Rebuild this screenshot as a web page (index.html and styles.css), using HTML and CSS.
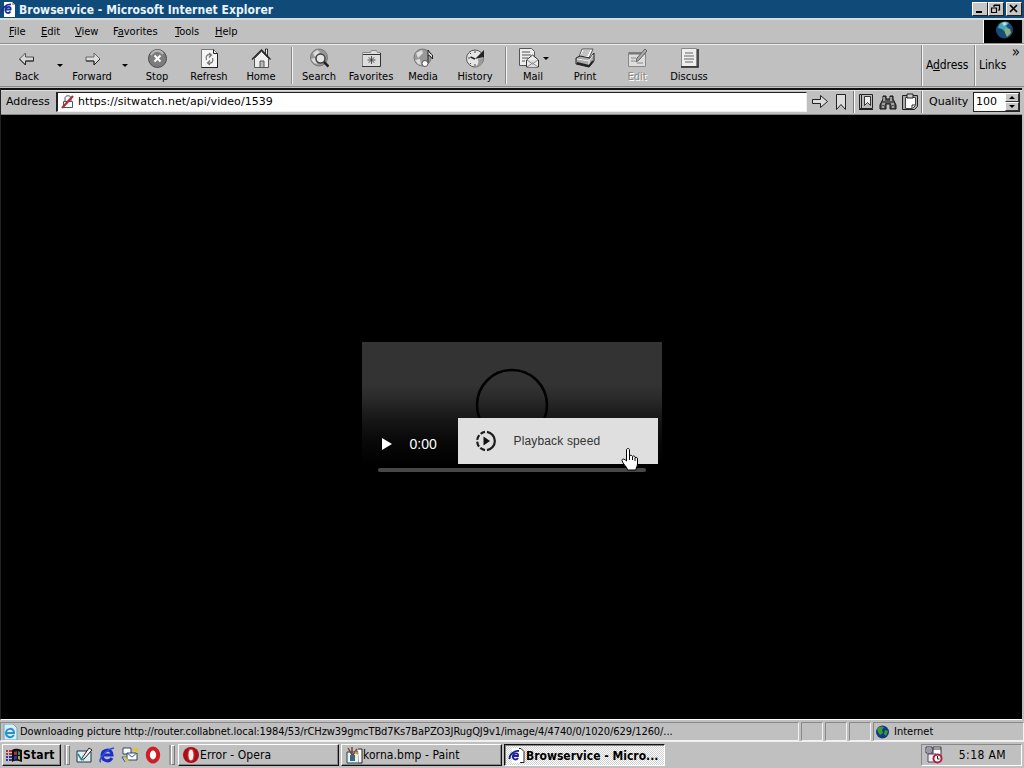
FILE: index.html
```
<!DOCTYPE html>
<html lang="en">
<head>
  <meta charset="UTF-8" />
  <title>Browservice - Microsoft Internet Explorer</title>
  <link rel="stylesheet" href="styles.css">
</head>
<body>

  <div class="titlebar">
    <svg class="i16" viewBox="0 0 16 16"><path d="M3 1h8l3 3v12H3z" fill="#fff"/><path d="M11 1v3h3" fill="#aaa"/><path d="M9.500 10.500c-2 3-6 1-5-2.500 1-3 6-3 5 .5H4M1 12C0 8 5 3 10 3.500" fill="none" stroke="#1a2d9c" stroke-width="1.800"/></svg>
    <span class="title">Browservice - Microsoft Internet Explorer</span>
    <div class="winbtns">
      <span class="winbtn"><svg viewBox="0 0 14 12"><path d="M3 9h6" stroke="#000" stroke-width="2"/></svg></span>
      <span class="winbtn"><svg viewBox="0 0 14 12"><path d="M5 4V2.500h5.500V7H9M5 2h6M2.500 5h5v4.500h-5zM2 5h6" fill="none" stroke="#000" stroke-width="1.200"/></svg></span>
      <span class="winbtn close"><svg viewBox="0 0 14 12"><path d="M3 2l7 7M10 2l-7 7" stroke="#000" stroke-width="1.700"/></svg></span>
    </div>
  </div>

  <div class="menubar">
    <span class="m-file"><u>F</u>ile</span>
    <span class="m-edit"><u>E</u>dit</span>
    <span class="m-view"><u>V</u>iew</span>
    <span class="m-fav">F<u>a</u>vorites</span>
    <span class="m-tools"><u>T</u>ools</span>
    <span class="m-help"><u>H</u>elp</span>
    <div class="throbber">
      <svg width="38" height="22" viewBox="0 0 38 22"><circle cx="20.500" cy="10" r="8.500" fill="#174d78"/><path d="M15 5c3-4 8-4 10-2l-3 3 3 3-3 4-4-4-4-1z" fill="#4aa7b4"/><path d="M21 8l5 1 1 4-4 4-2-4z" fill="#8fae78"/><path d="M18 3l3-1 2 2-3 2z" fill="#b9dedf"/></svg>
    </div>
  </div>

  <div class="toolbar">
    <div class="tb back"><svg viewBox="0 0 20 20"><path d="M2.500 11l6-6v4h8v4h-8v4z" fill="#d8d8d8" stroke="#555"/><path d="M2.500 11l6 6v-4h8V9" fill="none" stroke="#222"/></svg><span>Back</span></div>
    <div class="drop"></div>
    <div class="tb fwd"><svg viewBox="0 0 20 20"><path d="M18 11l-6-6v4H4v4h8v4z" fill="#ddd" stroke="#666"/><path d="M4 13h8v4l6-6" fill="none" stroke="#222"/></svg><span>Forward</span></div>
    <div class="drop"></div>
    <div class="tb"><svg viewBox="0 0 20 20"><circle cx="10.500" cy="10.500" r="9" fill="#7c7c7c" stroke="#4a4a4a"/><path d="M4 7c3-6 10-5 12-1" fill="none" stroke="#b8b8b8" stroke-width="2"/><path d="M7.500 7.500l6 6M13.500 7.500l-6 6" stroke="#fff" stroke-width="2"/></svg><span>Stop</span></div>
    <div class="tb"><svg viewBox="0 0 20 20"><path d="M2.500 1.500h12l4 4v14h-16z" fill="#f4f4f4" stroke="#777"/><path d="M14.500 1.500v4h4v14h-16" fill="none" stroke="#222"/><path d="M7.500 12c-1.500-4 1-6 4-5M10 5l2.500 2-2.500 2.500M13.500 10c1.500 3-1 6-4 5M11 17l-2.500-2 2.500-2.500" fill="none" stroke="#777" stroke-width="1.300"/></svg><span>Refresh</span></div>
    <div class="tb"><svg viewBox="0 0 20 20"><path d="M14.500 6V1h2v9" fill="#eee" stroke="#333"/><path d="M3.500 10.500v9h14v-9l-7-7z" fill="#eee" stroke="#555"/><path d="M1 11.500L10.500 2l9 9.500" fill="none" stroke="#222" stroke-width="1.300"/><path d="M9 19v-6h4v6" fill="#bbb" stroke="#555"/></svg><span>Home</span></div>
    <div class="sep"></div>
    <div class="tb"><svg viewBox="0 0 20 20"><circle cx="10" cy="9.500" r="8.500" fill="#999" stroke="#777"/><path d="M4 5l4-3 3 2-5 5zM2 11l4-1 2 6-3-1z" fill="#ddd"/><circle cx="11.500" cy="10.500" r="4.500" fill="#e6e6e6" stroke="#444" stroke-width="1.500"/><path d="M15 14l4.500 4.500" stroke="#222" stroke-width="2.500"/></svg><span>Search</span></div>
    <div class="tb"><svg viewBox="0 0 20 20"><path d="M1.500 5.500v-1h8l1-2h5l1 2h3v14h-18z" fill="#ddd" stroke="#888"/><path d="M1 18.500h18.500V5M2 6.500h17" fill="none" stroke="#333"/><path d="M10.500 8v8M6.500 12h8M7.700 9.200l5.600 5.600M13.300 9.200l-5.600 5.600" stroke="#444" stroke-width=".9"/></svg><span>Favorites</span></div>
    <div class="tb"><svg viewBox="0 0 20 20"><circle cx="9.500" cy="9.500" r="8.500" fill="#999" stroke="#777"/><path d="M3 5l6-3 1 3-5 5zM2 12l5-1 1 6-3-1z" fill="#ddd"/><path d="M15 15V2l2 3 2.500 2v4l-2.500-3-2-1" fill="#ddd" stroke="#222"/><circle cx="12" cy="15.500" r="3" fill="#fff" stroke="#555"/></svg><span>Media</span></div>
    <div class="tb"><svg viewBox="0 0 20 20"><circle cx="10" cy="10.500" r="8.500" fill="#e5e5e5" stroke="#555"/><path d="M10 3v2M3 10h2M5 5l1 1M5 16l1-1M10 16v2M15 15l1 1" stroke="#444"/><path d="M10 11l9-9v7z" fill="#222"/><path d="M10 11l8.500-1c0 5-3 9-8.500 9 3-2 4-4 3-8z" fill="#999"/><path d="M5.500 9l4.500 2" stroke="#222" stroke-width="1.500"/></svg><span>History</span></div>
    <div class="sep"></div>
    <div class="tb mail"><svg viewBox="0 0 20 20"><path d="M.5.500h12l3 3v14H.5z" fill="#eee" stroke="#555"/><path d="M3 4h8M3 7h9M3 10h6M3 13h3" stroke="#555"/><path d="M7.500 12l6-5 6 5v7h-12z" fill="#eee" stroke="#333"/><path d="M8 19l5.500-4 5.500 4M8 12l5.500 4 5.500-4" fill="#ddd" stroke="#888"/></svg><i class="mini"></i><span>Mail</span></div>
    <div class="tb"><svg viewBox="0 0 20 20"><path d="M4 9l3-8h11l-4 9z" fill="#fff" stroke="#555"/><path d="M8 3h7M7 5h7M6 7h7" stroke="#888"/><path d="M1 10l4-2 10 2 4-5v8l-5 6-13-3z" fill="#aaa" stroke="#222"/><path d="M2 11l12 2v5M14 13l4-6" fill="none" stroke="#eee"/><path d="M2 15l12 3 4-5" fill="none" stroke="#222" stroke-width="2"/></svg><span>Print</span></div>
    <div class="tb off"><svg viewBox="0 0 20 20"><path d="M1.500 4.500h17v14h-17z" fill="#ddd" stroke="#888"/><path d="M2 5.500h16" stroke="#777" stroke-width="2"/><path d="M4 10h5M4 13h4M10 15h6" stroke="#888"/><path d="M9 14l1-4 8-9 2 2-8 9z" fill="#aaa" stroke="#666"/></svg><span>Edit</span></div>
    <div class="tb"><svg viewBox="0 0 20 20"><path d="M2.500.500h15v18h-15z" fill="#eee" stroke="#888"/><path d="M2 19h17V1" fill="none" stroke="#222" stroke-width="1.500"/><path d="M6 5h8M5 8h10M5 11h10M6 14h8" stroke="#666"/></svg><span>Discuss</span></div>
    <div class="band band-addr">A<u>d</u>dress</div>
    <div class="band band-links">Links<span class="chev">»</span></div>
  </div>

  <div class="page">
    <div class="addressbar">
      <span class="lbl">Address</span>
      <div class="url">
        <svg width="16" height="16" viewBox="0 0 16 16"><path d="M5 7V4c0-3 6-3 6 0v3M3.500 7.500h9v6h-9z" fill="none" stroke="#555"/><path d="M2 14L13 2" stroke="#b5293f" stroke-width="2.200"/></svg>
        <span>https://sitwatch.net/api/video/1539</span>
      </div>
      <div class="tools">
        <svg class="go" viewBox="0 0 18 18"><path d="M1.500 6.500h8v-4l7 6-7 6v-4h-8z" fill="#ddd" stroke="#222"/></svg>
        <svg class="mark" viewBox="0 0 18 18"><path d="M4.500 1.500h9v15l-4.500-5-4.500 5z" fill="#ddd" stroke="#222"/></svg>
        <i class="vsep"></i>
        <svg viewBox="0 0 18 18"><path d="M2.500 1.500h13v14h-13z" fill="#bbb" stroke="#222"/><path d="M4.500 2v13" stroke="#222"/><path d="M7.500 3.500h6v9l-3-3-3 3z" fill="#eee" stroke="#333"/><path d="M2 16.500h14" stroke="#222"/></svg>
        <svg class="find" viewBox="0 0 18 18"><path d="M4 3h3v3h4V3h3v3l3 6v4h-6v-5H7v5H1v-4l3-6z" fill="#555" stroke="#111"/><path d="M3 11h3M12 11h3M5 4v4M12 4v4M3 14h2M13 14h2" stroke="#eee"/></svg>
        <svg viewBox="0 0 18 18"><path d="M1.500 2.500h15v11l-3 3h-12z" fill="#aaa" stroke="#222"/><path d="M4.500 4.500h10v8l-3 3h-7z" fill="#fff" stroke="#444"/><path d="M6 1h6v4H6z" fill="#ccc" stroke="#222"/><path d="M14 12h-3v3" fill="none" stroke="#222"/></svg>
        <i class="vsep"></i>
      </div>
      <span class="quality">Quality</span>
      <div class="spin"><span>100</span>
        <div class="arrows"><b class="up"></b><b class="down"></b></div>
      </div>
    </div>

    <div class="viewport">
      <div class="video">
        <svg class="ring" width="74" height="74" viewBox="0 0 74 74"><circle cx="37" cy="37" r="35" fill="none" stroke="#000" stroke-width="2.500"/></svg>
        <div class="controls">
          <svg width="10" height="12" viewBox="0 0 10 12"><path d="M0 0l10 6-10 6z" fill="#fff"/></svg>
          <span>0:00</span>
        </div>
        <div class="track"></div>
        <div class="popup">
          <svg width="24" height="24" viewBox="0 0 24 24"><path d="M13 2.900a9.200 9.200 0 0 1 0 18.200" fill="none" stroke="#1c1c1c" stroke-width="2.200"/><path d="M11 21.100a9.200 9.200 0 0 1 0-18.200" fill="none" stroke="#1c1c1c" stroke-width="2.200" stroke-dasharray="5.200 1.900"/><path d="M9.500 7.500l6.500 4.500-6.500 4.500z" fill="#111"/></svg>
          <span>Playback speed</span>
        </div>
        <svg class="cursor" width="18" height="23" viewBox="0 0 18 23"><path d="M5.500 13V2c0-2 3-2 3 0v6c1-1 2.500-1 3 .5 1-1 2.500-.5 2.500 1 1.500-.5 2.500 0 2.500 1.500v5c0 2-1.500 3-1.500 6H6.500c0-3-5-6-5.500-9.500 0-2 2-2 4.500.5z" fill="#fff" stroke="#000"/><path d="M8.500 8v4M11.500 9v3M14 10v3" stroke="#000"/></svg>
      </div>
    </div>
  </div>

  <div class="statusbar">
    <div class="cell msg">
      <svg class="i16" viewBox="0 0 16 16"><path d="M2 0h9l4 4v12H2z" fill="#d8eef8" stroke="#6ab"/><path d="M12 11c-3 4-8 2-8-2 0-5 8-6 8 0H4" fill="none" stroke="#2c8fc9" stroke-width="2"/></svg>
      <span>Downloading picture http://router.collabnet.local:1984/53/rCHzw39gmcTBd7Ks7BaPZO3JRugQJ9v1/image/4/4740/0/1020/629/1260/...</span>
    </div>
    <div class="cell small"></div>
    <div class="cell small"></div>
    <div class="cell small"></div>
    <div class="cell zone">
      <svg class="i16" viewBox="0 0 16 16"><circle cx="8.500" cy="8" r="6.500" fill="#123a80"/><path d="M3 5c2-3 5-3 7-2L8 6l1 3-3 2-2-3zM11 6l3 1-2 5-2-2z" fill="#3c9a3c"/></svg>
      <span>Internet</span>
    </div>
  </div>

  <div class="taskbar">
    <div class="start">
      <svg width="17" height="15" viewBox="0 0 17 15"><path d="M6 2c3-2 6-1 10 0v12c-4-1-7-2-10 0z" fill="#111"/><path d="M8 4l3-1v4H8z" fill="#a33"/><path d="M12 3l2 1v3h-2z" fill="#386"/><path d="M8 8h3v3l-3 1z" fill="#33a"/><path d="M12 8h2v4l-2-1z" fill="#aa3"/><path d="M0 3h2M3 3h3M0 6h2M3 6h3" stroke="#a34" stroke-width="2"/><path d="M0 9h2M3 9h3M0 12h2M3 12h3" stroke="#339" stroke-width="2"/></svg>
      <span>Start</span>
    </div>
    <i class="grip g1"></i>
    <div class="quick">
      <svg class="i18" viewBox="0 0 18 18"><path d="M2 5h10l4 1v10H2z" fill="#dff0f5" stroke="#234"/><path d="M7 12L14 2l3 2-8 9-3 1z" fill="#eee" stroke="#222"/><path d="M3 8l3 5 3 1" fill="none" stroke="#288" stroke-width="1.500"/></svg>
      <svg class="i18" viewBox="0 0 18 18"><path d="M14 12c-3 5-10 3-10-3s10-7 10 0H5" fill="none" stroke="#1c2fc8" stroke-width="3"/><path d="M3 16c-4-1 5-13 13-14" fill="none" stroke="#2b4fd8" stroke-width="1.500"/></svg>
      <svg class="i18" viewBox="0 0 18 18"><path d="M2 2h8v6H2z" fill="#fff" stroke="#346"/><path d="M6 7h10v7H6z" fill="#fff" stroke="#345"/><path d="M6 7l5 4 5-4M4 16l-3-5h4" fill="none" stroke="#245dc0"/><path d="M11 4l5-1v4M3 11l4 4" stroke="#e2c02c" stroke-width="2" fill="none"/></svg>
      <svg class="i18" viewBox="0 0 18 18"><ellipse cx="9" cy="9" rx="5.200" ry="6.500" fill="#fff" stroke="#d01c24" stroke-width="4"/></svg>
    </div>
    <i class="grip g2"></i>
    <div class="task">
      <svg class="i18" viewBox="0 0 18 18"><circle cx="9" cy="9" r="8" fill="#a80f16"/><ellipse cx="9" cy="9" rx="3" ry="6" fill="#eee" stroke="#d8343a"/></svg>
      <span>Error - Opera</span>
    </div>
    <div class="task">
      <svg class="i18" viewBox="0 0 18 18"><path d="M2 6h12v11H2z" fill="#e8f2f2" stroke="#244"/><path d="M13 3h4v14h-3" fill="#fff" stroke="#222"/><path d="M3 2l4 7M7 1v9M12 3l-4 6" stroke="#744" stroke-width="1.500"/><path d="M5 9h5v6H5z" fill="#386b80"/><path d="M10 6l3 2" stroke="#c93" stroke-width="2"/></svg>
      <span>korna.bmp - Paint</span>
    </div>
    <div class="task active">
      <svg class="i18" viewBox="0 0 18 18"><path d="M4 2h8l4 4v11H4z" fill="#fff"/><path d="M11 2.500h2l3 3V16.500h-4" fill="none" stroke="#222"/><path d="M10 12c-2 3-6 1-5-2.500 1-3 6-3 5 .5H5M1.500 13C1 9 6 4 11 5" fill="none" stroke="#1a2494" stroke-width="1.800"/></svg>
      <span>Browservice - Micro...</span>
    </div>
    <div class="tray">
      <svg class="i18" viewBox="0 0 18 18"><path d="M1 1h6v6H1zM8 1h8v9H8z" fill="#fff" stroke="#334"/><path d="M2 3h4M2 5h4M8 3h8" stroke="#334"/><path d="M3 8h8v8H3z" fill="#eee" stroke="#546"/><circle cx="12.500" cy="12.500" r="4" fill="#fff" stroke="#b3203c" stroke-width="2"/><path d="M12.500 10v3h2" fill="none" stroke="#222"/></svg>
      <span>5:18 AM</span>
    </div>
  </div>

</body>
</html>
```
FILE: styles.css
```
* {
  box-sizing: border-box;
}

body {
  margin: 0;
  width: 1024px;
  height: 768px;
  overflow: hidden;
  display: flex;
  flex-direction: column;
  background: #c0c0c0;
  color: #000;
  font: 11px/14px "DejaVu Sans Condensed", "DejaVu Sans", sans-serif;
  font-stretch: condensed;
  white-space: nowrap;
}

svg {
  display: block;
  flex: none;
}

u {
  text-underline-offset: 1px;
}

.i16 {
  width: 16px;
  height: 16px;
}

.i18 {
  width: 18px;
  height: 18px;
}

/* title bar */
.titlebar {
  height: 18px;
  flex: none;
  display: flex;
  align-items: center;
  padding: 0 2px 0 1px;
  background: #104a78;
  color: #e8f4fa;
  font-weight: bold;
}

.title {
  margin: 1px 0 0 2px;
  font-size: 12px;
  letter-spacing: 0.05px;
}

.winbtns {
  margin-left: auto;
  display: flex;
}

.winbtn {
  width: 16px;
  height: 14px;
  background: #c6c6c6;
  border: 1px solid;
  border-color: #fff #222 #222 #fff;
}

.close {
  margin-left: 2px;
}

/* menu */
.menubar {
  height: 26px;
  flex: none;
  display: flex;
  align-items: center;
  padding-left: 9px;
  border-top: 2px solid #d8dde0;
  border-bottom: 1px solid #909090;
}

.m-file { width: 32px; }
.m-edit { width: 34px; }
.m-view { width: 38px; }
.m-fav { width: 62px; }
.m-tools { width: 40px; }

.throbber {
  margin-left: auto;
  margin-right: 2px;
  height: 23px;
  background: #000;
  border-left: 1px solid #fff;
}

/* button row */
.toolbar {
  height: 43px;
  flex: none;
  display: flex;
  padding-left: 2px;
  border-top: 1px solid #eee;
  border-bottom: 1px solid #888;
}

.tb {
  width: 52px;
  padding-top: 3px;
  display: flex;
  flex-direction: column;
  align-items: center;
  position: relative;
}

.tb svg {
  width: 20px;
  height: 20px;
  margin-bottom: 2px;
}

.tb.back {
  width: 50px;
}

.tb.fwd {
  width: 50px;
}

.tb.off {
  color: #8c8c8c;
  text-shadow: 1px 1px #fff;
}

.drop {
  width: 15px;
  padding: 19px 0 0 5px;
}

.fwd + .drop {
  width: 14px;
}

.drop::before,
.mini {
  content: "";
  display: block;
  width: 0;
  border: 3px solid transparent;
  border-top-color: #000;
  border-bottom: 0;
}

.tb.mail svg {
  margin-right: 8px;
}

.mini {
  position: absolute;
  left: 36px;
  top: 12px;
}

.sep {
  width: 6px;
  margin: 2px 0;
  border-right: 1px solid #f4f4f4;
  box-shadow: inset -1px 0 #888;
}

.band {
  padding: 13px 0 0 4px;
  border-left: 1px solid #888;
  box-shadow: inset 1px 0 #f4f4f4;
  font-size: 12px;
  letter-spacing: -0.1px;
}

.band-addr {
  margin-left: auto;
  width: 53px;
}

.band-links {
  width: 50px;
  position: relative;
}

.chev {
  position: absolute;
  right: 4px;
  top: 0;
  font-size: 15px;
}

/* page frame */
.page {
  flex: 1;
  display: flex;
  flex-direction: column;
  margin: 1px 2px 0 0;
  border-left: 1px solid #222;
  border-top: 2px solid #111;
  border-bottom: 1px solid #fff;
}

.addressbar {
  height: 25px;
  flex: none;
  display: flex;
  align-items: center;
  padding: 0 0 2px 5px;
  border-top: 1px solid #ddd;
  border-bottom: 1px solid #888;
  font-family: "DejaVu Sans", sans-serif;
  font-stretch: normal;
}

.lbl {
  width: 50px;
}

.url {
  width: 751px;
  height: 20px;
  display: flex;
  align-items: center;
  background: #fff;
  border: 1px solid #eee;
  border-left: 2px solid #222;
  border-top: 1px solid #222;
  padding-left: 2px;
}

.url span {
  margin-left: 2px;
  letter-spacing: 0.05px;
}

.tools {
  display: flex;
  align-items: center;
  padding-left: 2px;
}

.tools svg {
  width: 18px;
  height: 18px;
  margin: 0 2px;
}

.tools .mark {
  margin: 0 3px 0 1px;
}

.tools .find {
  margin: 0 2px;
}

.vsep {
  width: 2px;
  height: 22px;
  background: #fff;
  border-left: 1px solid #777;
}

.quality {
  margin-left: 6px;
}

.spin {
  margin-left: auto;
  margin-right: 2px;
  width: 47px;
  height: 20px;
  display: flex;
  justify-content: space-between;
  align-items: center;
  background: #fff;
  border: 1px solid #222;
  padding-left: 2px;
}

.arrows b {
  display: flex;
  align-items: center;
  justify-content: center;
  width: 14px;
  height: 9px;
  background: #c6c6c6;
  border: 1px solid;
  border-color: #fff #333 #333 #fff;
}

.arrows b::before {
  content: "";
  border: 3px solid transparent;
}

.arrows .up::before {
  border-top: 0;
  border-bottom-color: #000;
}

.arrows .down::before {
  border-bottom: 0;
  border-top-color: #000;
}

.viewport {
  flex: 1;
  background: #000;
  display: flex;
  align-items: center;
  justify-content: center;
}

/* video player */
.video {
  position: relative;
  width: 300px;
  height: 150px;
  background: linear-gradient(#333 0, #333 42px, #2a2a2a 56px, #161616 78px, #090909 98px, #000 122px);
  font-family: "Liberation Sans", Arial, sans-serif;
  padding: 92px 16px 0 20px;
}

.ring {
  position: absolute;
  left: 113px;
  top: 26px;
}

.controls {
  display: flex;
  align-items: center;
  height: 20px;
  color: #fff;
  font-size: 14px;
}

.controls span {
  margin-left: 18px;
}

.track {
  height: 4px;
  margin: 14px 0 0 -4px;
  background: #484848;
  border-radius: 2px;
}

.popup {
  position: absolute;
  left: 96px;
  top: 76px;
  width: 200px;
  height: 46px;
  display: flex;
  align-items: center;
  padding-left: 16px;
  background: #dfdfdf;
  color: #333;
  font-size: 12px;
}

.popup span {
  margin-left: 16px;
  letter-spacing: 0.15px;
}

.cursor {
  position: absolute;
  left: 259px;
  top: 106px;
}

/* status bar */
.statusbar {
  height: 22px;
  flex: none;
  display: flex;
  gap: 2px;
  padding: 2px 0 0;
  border-bottom: 1px solid #eee;
}

.cell {
  display: flex;
  align-items: center;
  border: 1px solid;
  border-color: #888 #f2f2f2 #f2f2f2 #888;
}

.msg {
  width: 799px;
  padding-left: 1px;
}

.msg span {
  margin-left: 2px;
  letter-spacing: -0.07px;
}

.small {
  width: 22px;
}

.zone {
  flex: 1;
}

.zone span {
  margin-left: 4px;
}

/* task bar */
.taskbar {
  height: 26px;
  flex: none;
  display: flex;
  align-items: center;
  padding: 1px 2px;
  font-size: 12px;
}

.start {
  width: 59px;
  height: 22px;
  display: flex;
  align-items: center;
  padding-left: 3px;
  border: 1px solid;
  border-color: #fff #111 #111 #fff;
  box-shadow: inset -1px -1px #888;
  font-weight: bold;
}

.start span {
  letter-spacing: 0.15px;
}

.grip {
  width: 4px;
  height: 20px;
  border: 1px solid;
  border-color: #fff #777 #777 #fff;
  box-shadow: -2px 0 #999;
}

.g1 { margin-left: 5px; }
.g2 { margin: 0 3px 0 9px; }

.quick {
  display: flex;
  gap: 5px;
  margin-left: 5px;
}

.task {
  width: 161px;
  height: 22px;
  display: flex;
  align-items: center;
  margin-right: 2px;
  padding-left: 3px;
  border: 1px solid;
  border-color: #fff #111 #111 #fff;
  box-shadow: inset -1px -1px #888;
}

.task span {
  letter-spacing: 0.08px;
}

.active {
  background: repeating-conic-gradient(#fff 0 25%, #d0d0d0 0 50%) 0 0 / 2px 2px;
  border-color: #111 #fff #fff #111;
  box-shadow: inset 1px 1px #888;
  font-weight: bold;
}

.active span {
  margin-top: 1px;
  letter-spacing: 0;
}

.tray {
  margin-left: auto;
  width: 101px;
  height: 22px;
  display: flex;
  align-items: center;
  justify-content: space-between;
  padding: 0 15px 0 3px;
  border: 1px solid;
  border-color: #888 #fff #fff #888;
}

.tray span {
  letter-spacing: 0.4px;
}
```
